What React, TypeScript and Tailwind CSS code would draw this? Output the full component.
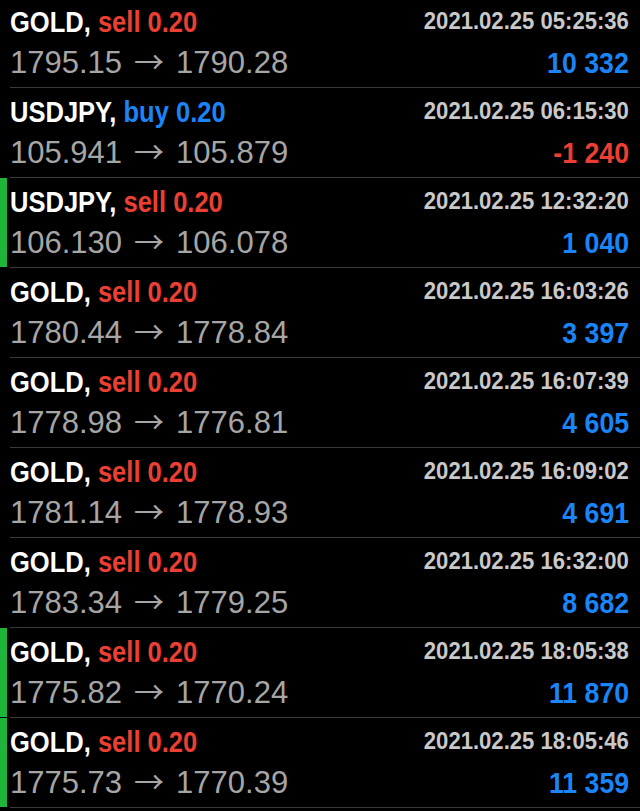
import React from "react";

type Row = {
  sym: string;
  side: "sell" | "buy";
  vol: string;
  date: string;
  open: string;
  close: string;
  profit: string;
  bar: boolean;
};

const rows: Row[] = [
  { sym: "GOLD", side: "sell", vol: "0.20", date: "2021.02.25 05:25:36", open: "1795.15", close: "1790.28", profit: "10 332", bar: false },
  { sym: "USDJPY", side: "buy", vol: "0.20", date: "2021.02.25 06:15:30", open: "105.941", close: "105.879", profit: "-1 240", bar: false },
  { sym: "USDJPY", side: "sell", vol: "0.20", date: "2021.02.25 12:32:20", open: "106.130", close: "106.078", profit: "1 040", bar: true },
  { sym: "GOLD", side: "sell", vol: "0.20", date: "2021.02.25 16:03:26", open: "1780.44", close: "1778.84", profit: "3 397", bar: false },
  { sym: "GOLD", side: "sell", vol: "0.20", date: "2021.02.25 16:07:39", open: "1778.98", close: "1776.81", profit: "4 605", bar: false },
  { sym: "GOLD", side: "sell", vol: "0.20", date: "2021.02.25 16:09:02", open: "1781.14", close: "1778.93", profit: "4 691", bar: false },
  { sym: "GOLD", side: "sell", vol: "0.20", date: "2021.02.25 16:32:00", open: "1783.34", close: "1779.25", profit: "8 682", bar: false },
  { sym: "GOLD", side: "sell", vol: "0.20", date: "2021.02.25 18:05:38", open: "1775.82", close: "1770.24", profit: "11 870", bar: true },
  { sym: "GOLD", side: "sell", vol: "0.20", date: "2021.02.25 18:05:46", open: "1775.73", close: "1770.39", profit: "11 359", bar: true },
];

function TradeRow({ r }: { r: Row }) {
  const neg = r.profit.startsWith("-");
  return (
    <div className="flex h-[90px]">
      <div className={`w-[7px] h-[89px] shrink-0 ${r.bar ? "bg-[#1fb53b]" : "bg-transparent"}`} />
      <div className="ml-[3px] flex flex-1 justify-between border-b border-[#3a3a3a] pr-[11px]">
        <div className="flex flex-col pt-[7px]">
          <div className="h-[34px] leading-[34px] text-[29px] font-bold whitespace-nowrap">
            <span className="inline-block origin-left scale-x-[0.88]">
              <span className="text-white">{r.sym}, </span>
              <span className={r.side === "sell" ? "text-[#ec3f33]" : "text-[#1b84f6]"}>
                {r.side} {r.vol}
              </span>
            </span>
          </div>
          <div className="mt-[6px] h-[36px] leading-[36px] text-[31px] text-[#a6a6a6] whitespace-nowrap">
            {r.open}
            <span
              className="inline-block w-[54px] text-center text-[30px] leading-[20px]"
              style={{ fontFamily: '"Noto Sans CJK JP", "DejaVu Sans", sans-serif' }}
            >
              →
            </span>
            {r.close}
          </div>
        </div>
        <div className="flex flex-col items-end pt-[8px]">
          <div className="h-[30px] leading-[30px] text-[24px] font-bold text-[#c9c9c9] whitespace-nowrap">
            <span className="inline-block origin-right scale-x-[0.92]">{r.date}</span>
          </div>
          <div
            className={`mt-[9px] h-[36px] leading-[36px] text-[30px] font-bold whitespace-nowrap ${
              neg ? "text-[#ec3f33]" : "text-[#1b84f6]"
            }`}
          >
            <span className="inline-block origin-right scale-x-[0.89]">{r.profit}</span>
          </div>
        </div>
      </div>
    </div>
  );
}

export default function App() {
  return (
    <div
      className="h-[811px] w-[640px] overflow-hidden bg-black"
      style={{ fontFamily: '"Liberation Sans", Arial, sans-serif' }}
    >
      <div className="-mt-[2px]">
        {rows.map((r, i) => (
          <TradeRow key={i} r={r} />
        ))}
      </div>
    </div>
  );
}
